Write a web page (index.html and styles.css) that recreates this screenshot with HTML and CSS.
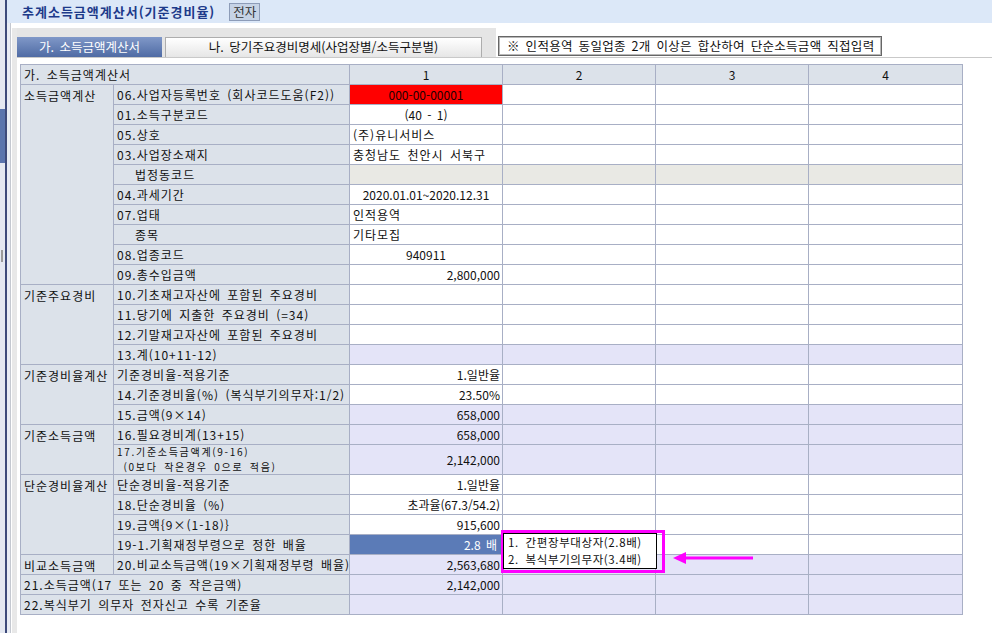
FILE: index.html
```html
<!DOCTYPE html>
<html lang="ko">
<head>
    <meta charset="UTF-8">
    <title>추계소득금액계산서(기준경비율)</title>
    <link rel="stylesheet" href="styles.css">
</head>
<body>
<div class="screen">
    <div class="rail">
        <div class="rail-mark"></div>
        <div class="rail-tick"></div>
    </div>
    <div class="rail-line"></div>
    <div class="main">
        <div class="titlebar">
            <span class="title">추계소득금액계산서(기준경비율)</span>
            <span class="btn">전자</span>
        </div>
        <div class="work">
            <div class="gutter"></div>
            <div class="frame">
                <div class="tabrow">
                    <div class="tabs">
                        <div class="tab on">가. 소득금액계산서</div>
                        <div class="tab">나. 당기주요경비명세(사업장별/소득구분별)</div>
                    </div>
                    <div class="note">※ 인적용역 동일업종 2개 이상은 합산하여 단순소득금액 직접입력</div>
                </div>

                <div class="sheet">
                    <table>
                        <colgroup>
                            <col style="width:93px">
                            <col style="width:236px">
                            <col style="width:153px">
                            <col style="width:153px">
                            <col style="width:153px">
                            <col style="width:154px">
                        </colgroup>
                        <tr class="head">
                            <td colspan="2" class="lbl">가. 소득금액계산서</td>
                            <td class="c">1</td><td class="c">2</td><td class="c">3</td><td class="c">4</td>
                        </tr>
                        <tr>
                            <td rowspan="10" class="grp">소득금액계산</td>
                            <td class="lbl">06.사업자등록번호 (회사코드도움(F2))</td>
                            <td class="c red">000-00-00001</td><td></td><td></td><td></td>
                        </tr>
                        <tr><td class="lbl">01.소득구분코드</td><td class="c">(40 - 1)</td><td></td><td></td><td></td></tr>
                        <tr><td class="lbl">05.상호</td><td class="t">(주)유니서비스</td><td></td><td></td><td></td></tr>
                        <tr><td class="lbl">03.사업장소재지</td><td class="t">충청남도 천안시 서북구</td><td></td><td></td><td></td></tr>
                        <tr class="gray"><td class="lbl indent">법정동코드</td><td></td><td></td><td></td><td></td></tr>
                        <tr><td class="lbl">04.과세기간</td><td class="c">2020.01.01~2020.12.31</td><td></td><td></td><td></td></tr>
                        <tr><td class="lbl">07.업태</td><td class="t">인적용역</td><td></td><td></td><td></td></tr>
                        <tr><td class="lbl indent">종목</td><td class="t">기타모집</td><td></td><td></td><td></td></tr>
                        <tr><td class="lbl">08.업종코드</td><td class="c">940911</td><td></td><td></td><td></td></tr>
                        <tr><td class="lbl">09.총수입금액</td><td class="r">2,800,000</td><td></td><td></td><td></td></tr>

                        <tr>
                            <td rowspan="4" class="grp">기준주요경비</td>
                            <td class="lbl">10.기초재고자산에 포함된 주요경비</td><td></td><td></td><td></td><td></td>
                        </tr>
                        <tr><td class="lbl">11.당기에 지출한 주요경비 (=34)</td><td></td><td></td><td></td><td></td></tr>
                        <tr><td class="lbl">12.기말재고자산에 포함된 주요경비</td><td></td><td></td><td></td><td></td></tr>
                        <tr class="calc"><td class="lbl">13.계(10+11-12)</td><td></td><td></td><td></td><td></td></tr>

                        <tr>
                            <td rowspan="3" class="grp">기준경비율계산</td>
                            <td class="lbl">기준경비율-적용기준</td><td class="r">1.일반율</td><td></td><td></td><td></td>
                        </tr>
                        <tr><td class="lbl">14.기준경비율(%) (복식부기의무자:1/2)</td><td class="r">23.50%</td><td></td><td></td><td></td></tr>
                        <tr class="calc"><td class="lbl">15.금액(9×14)</td><td class="r">658,000</td><td></td><td></td><td></td></tr>

                        <tr class="calc">
                            <td rowspan="2" class="grp">기준소득금액</td>
                            <td class="lbl">16.필요경비계(13+15)</td><td class="r">658,000</td><td></td><td></td><td></td>
                        </tr>
                        <tr class="calc tall">
                            <td class="lbl two">
                                <div>17.기준소득금액계(9-16)</div>
                                <div>&nbsp;(0보다 작은경우 0으로 적음)</div>
                            </td>
                            <td class="r">2,142,000</td><td></td><td></td><td></td>
                        </tr>

                        <tr>
                            <td rowspan="4" class="grp">단순경비율계산</td>
                            <td class="lbl">단순경비율-적용기준</td><td class="r">1.일반율</td><td></td><td></td><td></td>
                        </tr>
                        <tr><td class="lbl">18.단순경비율 (%)</td><td class="r">초과율(67.3/54.2)</td><td></td><td></td><td></td></tr>
                        <tr><td class="lbl">19.금액{9×(1-18)}</td><td class="r">915,600</td><td></td><td></td><td></td></tr>
                        <tr><td class="lbl">19-1.기획재정부령으로 정한 배율</td><td class="r sel">2.8 배</td><td></td><td></td><td></td></tr>

                        <tr class="calc">
                            <td class="grp">비교소득금액</td>
                            <td class="lbl">20.비교소득금액(19×기획재정부령 배율)</td><td class="r">2,563,680</td><td></td><td></td><td></td>
                        </tr>
                        <tr class="calc"><td colspan="2" class="lbl">21.소득금액(17 또는 20 중 작은금액)</td><td class="r">2,142,000</td><td></td><td></td><td></td></tr>
                        <tr class="calc"><td colspan="2" class="lbl">22.복식부기 의무자 전자신고 수록 기준율</td><td></td><td></td><td></td><td></td></tr>
                    </table>

                    <div class="mark"></div>
                    <div class="droplist">
                        <div>1. 간편장부대상자(2.8배)</div>
                        <div>2. 복식부기의무자(3.4배)</div>
                    </div>
                    <svg class="arrow" width="80" height="14" viewBox="0 0 80 14">
                        <line x1="10" y1="7" x2="80" y2="7" stroke="#ff00ff" stroke-width="3"/>
                        <polygon points="0,7 13,1 13,13" fill="#ff00ff"/>
                    </svg>
                </div>
            </div>
        </div>
    </div>
</div>
</body>
</html>
```

FILE: styles.css
```css
* {
    box-sizing: border-box;
}

html, body {
    margin: 0;
    height: 100%;
}

body {
    font-family: "Noto Sans CJK KR", "Noto Sans", sans-serif;
    font-size: 12px;
    color: #111;
    background-color: #fff;
    overflow: hidden;
}

.screen {
    display: flex;
    height: 100vh;
}

/* left edge of the host window */
.rail {
    width: 5px;
    background-color: #e4e8f1;
    display: flex;
    flex-direction: column;
}

.rail-mark {
    margin-top: 109px;
    height: 54px;
    background-color: #5a74ad;
}

.rail-tick {
    margin-top: 87px;
    margin-left: 1px;
    width: 2px;
    height: 12px;
    background-color: #9a9a9a;
}

.rail-line {
    width: 2px;
    background-color: #3d4a7a;
}

.main {
    flex: 1;
    display: flex;
    flex-direction: column;
}

.titlebar {
    height: 23px;
    background-color: #dce8f8;
    display: flex;
    align-items: center;
    padding-left: 15px;
}

.title {
    font-size: 13px;
    font-weight: bold;
    color: #1d3a8a;
    letter-spacing: 1px;
}

.btn {
    margin-left: 14px;
    height: 18px;
    width: 31px;
    line-height: 16px;
    text-align: center;
    background-color: #c6d3e6;
    border: 1px solid #8d9cb8;
    color: #333;
    font-size: 12.5px;
}

.work {
    flex: 1;
    display: flex;
}

.gutter {
    width: 4px;
    background-color: #e8ecf4;
    border-right: 1px solid #c4c8d0;
    margin-right: 1px;
}

.frame {
    flex: 1;
    margin-top: 5px;
    border-left: 5px solid #e8e8e8;
}

.tabrow {
    display: flex;
    align-items: flex-end;
    height: 30px;
    border-bottom: 1px solid #c9c9c9;
}

.tabs {
    width: 479px;
    height: 29px;
    padding-top: 9px;
    background-color: #e5e5e5;
    display: flex;
    gap: 3px;
}

.tab {
    width: 317px;
    height: 20px;
    line-height: 18px;
    text-align: center;
    font-size: 12.5px;
    word-spacing: 2px;
    background: linear-gradient(#ffffff, #e6e6e6);
    border: 1px solid #adadad;
    border-bottom: none;
}

.tab.on {
    width: 145px;
    color: #fff;
    border: none;
    line-height: 20px;
    background: linear-gradient(#8098c8, #4f6ba4);
}

.note {
    margin-left: 2px;
    margin-bottom: 1px;
    width: 384px;
    height: 20px;
    line-height: 17px;
    padding-left: 8px;
    border: 1px solid #666;
    box-shadow: inset 0 0 0 1px #b8b8b8;
    font-size: 12.5px;
    letter-spacing: 0.3px;
    word-spacing: 2px;
    white-space: nowrap;
}

.sheet {
    position: relative;
    margin: 6px 0 0 3px;
    width: 942px;
}

table {
    border-collapse: collapse;
    table-layout: fixed;
    width: 942px;
}

tr {
    height: 20px;
}

tr.tall {
    height: 30px;
}

td {
    border: 1px solid #a8afc5;
    padding: 0 3px;
    height: 20px;
    background-color: #fff;
    white-space: nowrap;
    overflow: hidden;
    word-spacing: 2px;
    vertical-align: middle;
}

td.lbl, td.grp, td.t {
    letter-spacing: 1px;
}

tr.calc td {
    background-color: #e4e4f8;
}

tr.gray td {
    background-color: #e9e9e4;
}

td.lbl, td.grp, tr.head td {
    background-color: #dce2ea;
}

tr.calc td.lbl, tr.calc td.grp, tr.gray td.lbl {
    background-color: #dce2ea;
}

td.grp {
    vertical-align: top;
    padding-top: 2px;
}

td.indent {
    padding-left: 21px;
}

/* two lines squeezed into one 30px row */
td.two {
    font-size: 10px;
    line-height: 14.5px;
    letter-spacing: 1.7px;
}

td.c {
    text-align: center;
}

td.r {
    text-align: right;
    padding-right: 2px;
}

td.red {
    background-color: #ff0000;
    color: #220000;
}

td.sel {
    background-color: #5b7bb7;
    color: #fff;
    padding-right: 5px;
}

/* highlighted dropdown */
.mark {
    position: absolute;
    left: 481px;
    top: 466px;
    width: 164px;
    height: 43px;
    border: 3px solid #ff00ff;
}

.droplist {
    position: absolute;
    left: 483px;
    top: 469px;
    width: 154px;
    height: 36px;
    background-color: #fff;
    border: 1px solid #000;
    padding: 0 0 0 4px;
    line-height: 17px;
    font-size: 11.5px;
    letter-spacing: 0.6px;
    word-spacing: 3px;
    white-space: nowrap;
}

.arrow {
    position: absolute;
    left: 653px;
    top: 487px;
}
```
